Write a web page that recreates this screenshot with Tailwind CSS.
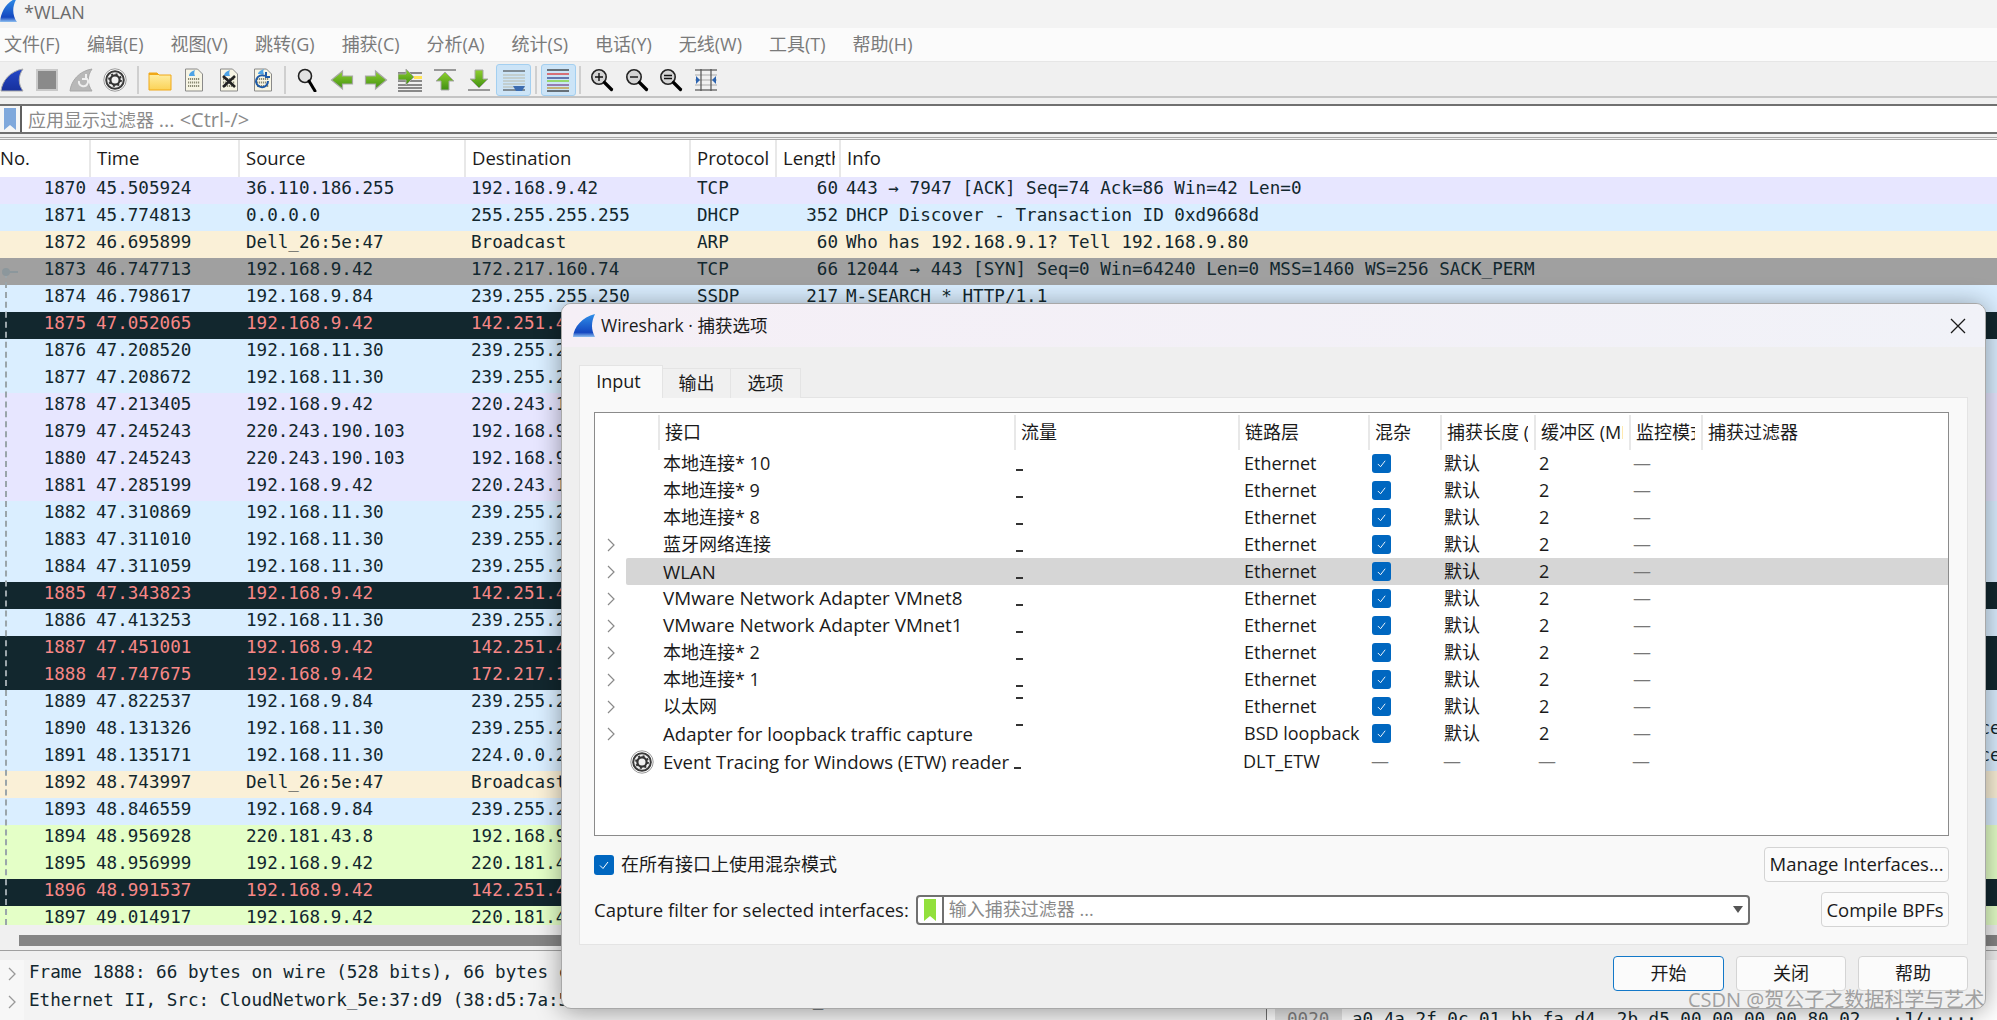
<!DOCTYPE html>
<html lang="zh-CN">
<head>
  <meta charset="UTF-8" />
  <title>*WLAN</title>
  <script src="https://cdn.jsdelivr.net/npm/@tailwindcss/browser@4"></script>
</head>
<body class="w-[1997px] h-[1020px] overflow-hidden bg-[#f0f0f0] text-[18px] text-[#1a1a1a] font-['Open_Sans','Noto_Sans_CJK_SC',sans-serif]">

  <!-- shared icons -->
  <svg class="absolute w-0 h-0">
    <defs>
      <linearGradient id="fin" x1="0" y1="0" x2="0" y2="1"><stop offset="0" stop-color="#2f8fe8"/><stop offset="0.8" stop-color="#1447c0"/><stop offset="1" stop-color="#8fc0f0"/></linearGradient>
      <linearGradient id="fin2" x1="0" y1="0" x2="0" y2="1"><stop offset="0" stop-color="#2448c8"/><stop offset="1" stop-color="#17309c"/></linearGradient>
      <linearGradient id="folder" x1="0" y1="0" x2="0" y2="1"><stop offset="0" stop-color="#fff0a8"/><stop offset="1" stop-color="#fbd257"/></linearGradient>
      <linearGradient id="arrow" x1="0" y1="0" x2="0" y2="1"><stop offset="0" stop-color="#8fd030"/><stop offset="1" stop-color="#3f8f10"/></linearGradient>
      <symbol id="gear" viewBox="0 0 24 24">
        <circle cx="12" cy="12" r="11.2" fill="#fff" stroke="#9a9a9a" stroke-width="1"/>
        <circle cx="12" cy="12" r="8.8" fill="#f0f0f0" stroke="#3a3a3a" stroke-width="2"/>
        <circle cx="12" cy="12" r="4.6" fill="none" stroke="#333" stroke-width="2.2"/>
        <circle cx="12" cy="12" r="6" fill="none" stroke="#333" stroke-width="1.8" stroke-dasharray="2 2.7"/>
      </symbol>
      <symbol id="doc" viewBox="0 0 24 24">
        <path d="M3.5 1h12l5 5v17h-17z" fill="#f7f5e4" stroke="#8a8a8a"/>
        <path d="M6 11h12M6 14.5h12M6 18h12" stroke="#8c8c74" stroke-width="2" stroke-dasharray="1.2 .8"/>
      </symbol>
      <symbol id="lens" viewBox="0 0 24 24">
        <circle cx="9" cy="9" r="7.2" fill="#d4d4d4" stroke="#222" stroke-width="1.6"/>
        <path d="M14.5 14.5l7 7" stroke="#000" stroke-width="3.2" stroke-linecap="round"/>
      </symbol>
      <symbol id="rarrow" viewBox="0 0 24 24">
        <path d="M1.5 8h10V3l11 9-11 9v-5h-10z" fill="url(#arrow)" stroke="#a8a8a8" stroke-width="1.2"/>
      </symbol>
    </defs>
  </svg>

  <div class="relative w-full h-full flex flex-col">
    <!-- title bar -->
    <div class="h-[28px] shrink-0 bg-[#f3f3f3] flex items-center overflow-hidden">
      <svg class="w-[18px] h-[26px] -mt-[6px] shrink-0" viewBox="0 0 18 26"><path d="M0 24C1 14 6 4 17 0 12 8 12 17 17 24z" fill="url(#fin)"/></svg>
      <span class="ml-[6px] mb-[5px] text-[18px] leading-none text-[#6b6b6b]">*WLAN</span>
    </div>

    <!-- menu bar -->
    <div class="h-[33px] shrink-0 bg-[#fbfbfb] flex items-center pl-[4px] gap-[27px] text-[#7a7a7a] whitespace-nowrap">
      <span>文件(F)</span><span>编辑(E)</span><span>视图(V)</span><span>跳转(G)</span><span>捕获(C)</span><span>分析(A)</span><span>统计(S)</span><span>电话(Y)</span><span>无线(W)</span><span>工具(T)</span><span>帮助(H)</span>
    </div>

    <!-- toolbar -->
    <div class="h-[37px] shrink-0 pt-[2px] bg-[#f0f0f0] border-b-2 border-[#c4c4c4] border-t border-t-[#e6e6e6] flex items-center -ml-[5px]">
      <div class="w-[34.4px] flex justify-center"><svg class="w-[24px] h-[24px]" viewBox="0 0 24 24"><path d="M1 23C2 13 10 3 23 1 18 8 18 16 23 23z" fill="url(#fin2)" stroke="#a9a9a9"/></svg></div>
      <div class="w-[34.4px] flex justify-center"><svg class="w-[24px] h-[24px]" viewBox="0 0 24 24"><rect x="2" y="2" width="20" height="20" fill="#8a8a8a" stroke="#c9c9c9" stroke-width="2"/></svg></div>
      <div class="w-[34.4px] flex justify-center"><svg class="w-[24px] h-[24px]" viewBox="0 0 24 24"><path d="M1 23C2 13 10 3 23 1 18 8 18 16 23 23z" fill="#b8b8b8" stroke="#a9a9a9"/><path d="M10 13a4.5 4.5 0 1 0 7-3M17 6v5h-4" fill="none" stroke="#efefef" stroke-width="2"/></svg></div>
      <div class="w-[34.4px] flex justify-center"><svg class="w-[24px] h-[24px]"><use href="#gear"/></svg></div>
      <div class="w-[10px] flex justify-center"><div class="w-[2px] h-[28px] bg-[#cfcfcf]"></div></div>
      <div class="w-[34.4px] flex justify-center"><svg class="w-[24px] h-[24px]" viewBox="0 0 24 24"><path d="M1 5h8l2 2h12v15H1z" fill="url(#folder)" stroke="#f0a818"/><path d="M1 5h8l2 2H1z" fill="#f0a818"/></svg></div>
      <div class="w-[34.4px] flex justify-center"><svg class="w-[24px] h-[24px]" viewBox="0 0 24 24"><use href="#doc"/><path d="M7 8c0-3 3-5 6-6 -1 2-1 4 0 6z" fill="#4da3e6"/></svg></div>
      <div class="w-[34.4px] flex justify-center"><svg class="w-[24px] h-[24px]" viewBox="0 0 24 24"><use href="#doc"/><path d="M7 8c0-3 3-5 6-6 -1 2-1 4 0 6z" fill="#4da3e6"/><path d="M6 8l12 11M18 8L6 19" stroke="#222" stroke-width="2.6"/></svg></div>
      <div class="w-[34.4px] flex justify-center"><svg class="w-[24px] h-[24px]" viewBox="0 0 24 24"><use href="#doc"/><path d="M7 6c0-2 3-4 6-5 -1 2-1 3 0 5z" fill="#4da3e6"/><path d="M14 8a6 6 0 1 0 3 5M15 4v5h4" fill="none" stroke="#1d5aa8" stroke-width="2"/></svg></div>
      <div class="w-[10px] flex justify-center"><div class="w-[2px] h-[28px] bg-[#cfcfcf]"></div></div>
      <div class="w-[34.4px] flex justify-center"><svg class="w-[24px] h-[24px]" viewBox="0 0 24 24"><circle cx="10" cy="8" r="6.5" fill="#e4e4e4" stroke="#222" stroke-width="1.6"/><path d="M14 13l6 10" stroke="#000" stroke-width="3" stroke-linecap="round"/></svg></div>
      <div class="w-[34.4px] flex justify-center"><svg class="w-[24px] h-[24px] -scale-x-100"><use href="#rarrow"/></svg></div>
      <div class="w-[34.4px] flex justify-center"><svg class="w-[24px] h-[24px]"><use href="#rarrow"/></svg></div>
      <div class="w-[34.4px] flex justify-center"><svg class="w-[24px] h-[24px]" viewBox="0 0 24 24"><path d="M0 5h24M0 9h24M0 13h24M0 17h24M0 20h24M0 23h24" stroke="#222" stroke-width="1.2"/><path d="M16 8h8v3h-8z" fill="#ffe455"/><path d="M0 6h8V1l8 8-8 8v-5H0z" fill="url(#arrow)" stroke="#a8a8a8"/></svg></div>
      <div class="w-[34.4px] flex justify-center"><svg class="w-[24px] h-[24px]" viewBox="0 0 24 24"><path d="M1 2h22" stroke="#999" stroke-width="2"/><path d="M12 4l9 9h-5v9H8v-9H3z" fill="url(#arrow)" stroke="#a8a8a8"/></svg></div>
      <div class="w-[34.4px] flex justify-center"><svg class="w-[24px] h-[24px]" viewBox="0 0 24 24"><path d="M1 22h22" stroke="#999" stroke-width="2"/><path d="M12 20l9-9h-5V2H8v9H3z" fill="url(#arrow)" stroke="#a8a8a8"/></svg></div>
      <div class="w-[34.4px] flex justify-center"><div class="w-[35px] h-[32px] shrink-0 rounded-[3px] bg-[#cce4f7] border border-[#a3cff0] flex items-center justify-center"><svg class="w-[24px] h-[24px]" viewBox="0 0 24 24"><path d="M1 3h22M1 22h22" stroke="#333" stroke-width="1.2"/><path d="M1 7h22M1 10h22M1 13h22M1 16h22M1 19h22" stroke="#b8b8a8" stroke-width="1.2"/><path d="M11 18h12l-3 5h-6z" fill="#3c6cb0"/></svg></div></div>
      <div class="w-[10px] flex justify-center"><div class="w-[2px] h-[28px] bg-[#cfcfcf]"></div></div>
      <div class="w-[34.4px] flex justify-center"><div class="w-[35px] h-[32px] shrink-0 rounded-[3px] bg-[#cce4f7] border border-[#a3cff0] flex items-center justify-center"><svg class="w-[24px] h-[24px]" viewBox="0 0 24 24"><path d="M1 2h22" stroke="#222" stroke-width="1.2"/><path d="M1 6h22" stroke="#e02020" stroke-width="1.2"/><path d="M1 10h22" stroke="#203080" stroke-width="1.2"/><path d="M1 13h22" stroke="#70d010" stroke-width="1.2"/><path d="M1 17h22" stroke="#703880" stroke-width="1.2"/><path d="M1 20h22" stroke="#c09020" stroke-width="1.2"/><path d="M1 23h22" stroke="#222" stroke-width="1.2"/></svg></div></div>
      <div class="w-[10px] flex justify-center"><div class="w-[2px] h-[28px] bg-[#cfcfcf]"></div></div>
      <div class="w-[34.4px] flex justify-center"><svg class="w-[24px] h-[24px]" viewBox="0 0 24 24"><use href="#lens"/><path d="M5 9h8M9 5v8" stroke="#111" stroke-width="1.4"/></svg></div>
      <div class="w-[34.4px] flex justify-center"><svg class="w-[24px] h-[24px]" viewBox="0 0 24 24"><use href="#lens"/><path d="M5 9h8" stroke="#111" stroke-width="1.4"/></svg></div>
      <div class="w-[34.4px] flex justify-center"><svg class="w-[24px] h-[24px]" viewBox="0 0 24 24"><use href="#lens"/><path d="M5 7.5h8M5 10.5h8" stroke="#111" stroke-width="1.4"/></svg></div>
      <div class="w-[34.4px] flex justify-center"><svg class="w-[24px] h-[24px]" viewBox="0 0 24 24"><path d="M1 2h22M1 22h22" stroke="#333" stroke-width="1.2"/><path d="M1 7h22M1 12h22M1 17h22" stroke="#aaa" stroke-width="1.2"/><path d="M7 1v22M17 1v22" stroke="#555" stroke-width="1.2"/><path d="M2 8l4 4-4 4zM22 8l-4 4 4 4z" fill="#2c64b0"/></svg></div>
    </div>

    <!-- display filter -->
    <div class="mt-[6px] h-[30px] shrink-0 bg-white border-y-2 border-[#707070] flex items-center">
      <div class="w-[22px] h-full flex justify-center items-center bg-[#f6f6f6] border-r-2 border-[#606060]">
        <svg class="w-[12px] h-[22px]" viewBox="0 0 12 22"><path d="M0 0h12v22l-6-5-6 5z" fill="#7fa8dc"/></svg>
      </div>
      <span class="ml-[6px] mt-[1px] text-[#8a8a8a]">应用显示过滤器 <span class="text-[20px]">... &lt;Ctrl-/&gt;</span></span>
    </div>
    <div class="h-[3px] shrink-0 mt-[3px] border-y border-[#a8a8a8]"></div>

    <!-- packet list header -->
    <div class="h-[37px] shrink-0 bg-white flex items-center whitespace-nowrap leading-none text-[18.5px] pb-[1px]">
      <div class="w-[91px] h-[37px] flex items-center border-r-2 border-[#e8e8e8]">No.</div>
      <div class="w-[149px] h-[37px] flex items-center pl-[6px] border-r-2 border-[#e8e8e8]">Time</div>
      <div class="w-[226px] h-[37px] flex items-center pl-[6px] border-r-2 border-[#e8e8e8]">Source</div>
      <div class="w-[225px] h-[37px] flex items-center pl-[6px] border-r-2 border-[#e8e8e8]">Destination</div>
      <div class="w-[86px] h-[37px] flex items-center pl-[6px] border-r-2 border-[#e8e8e8]">Protocol</div>
      <div class="w-[64px] h-[37px] flex items-center pl-[6px] border-r-2 border-[#e8e8e8]"><span class="w-[52px] overflow-hidden">Length</span></div>
      <div class="flex-1 h-[37px] flex items-center pl-[6px]">Info</div>
    </div>

    <!-- packet list -->
    <div class="relative h-[748px] shrink-0 overflow-hidden font-['DejaVu_Sans_Mono',monospace] text-[17.6px] text-[#12272e] whitespace-nowrap" id="packets"></div>

    <!-- packet detail + bytes -->
    <div class="flex-1 min-h-0 overflow-hidden font-['DejaVu_Sans_Mono',monospace] text-[17.6px] text-[#12272e] whitespace-nowrap">
      <div class="h-[25px] flex items-center pl-[19px] pt-[5px]"><div class="flex-1 h-[11px] bg-[#858585]"></div></div>
      <div class="h-[1px] bg-[#a0a0a0]"></div>
      <div class="flex mt-[9px] h-[60px]">
        <div class="w-[24px] shrink-0 bg-[#f7f7f7] flex flex-col">
          <div class="h-[28px] flex items-center justify-center"><svg class="w-[10px] h-[14px]" viewBox="0 0 10 14"><path d="M2 1l6 6-6 6" fill="none" stroke="#999" stroke-width="1.3"/></svg></div>
          <div class="h-[28px] flex items-center justify-center"><svg class="w-[10px] h-[14px]" viewBox="0 0 10 14"><path d="M2 1l6 6-6 6" fill="none" stroke="#999" stroke-width="1.3"/></svg></div>
        </div>
        <div class="w-[1243px] shrink-0 bg-[#f3f3f3] pl-[5px] overflow-hidden border-r border-[#707070]">
          <div class="h-[28px] leading-[25px]">Frame 1888: 66 bytes on wire (528 bits), 66 bytes captured (528 bits) on interface</div>
          <div class="h-[28px] leading-[25px]">Ethernet II, Src: CloudNetwork_5e:37:d9 (38:d5:7a:5e:37:d9), Dst: 00:00:00_00:00:00</div>
          <div class="h-[28px] leading-[25px]">Internet Protocol Version 4, Src: 192.168.9.42, Dst: 172.217.160.74</div>
        </div>
        <div class="flex-1 flex pt-[46px] bg-white">
          <div class="ml-[8px] w-[67px] pl-[12px] h-[40px] bg-[#e4e4e4] text-[#808080]">0020</div>
          <div class="pl-[10px] whitespace-pre">a0 4a 2f 0c 01 bb fa d4  2b d5 00 00 00 00 80 02   ·J/·····  ······</div>
        </div>
      </div>
    </div>
  </div>

  <!-- capture options dialog -->
  <div class="absolute left-[561px] top-[303px] w-[1425px] h-[706px] rounded-[10px] border border-[#a8a8a8] bg-[#efefef] shadow-[0_2px_26px_rgba(0,0,0,0.38)] flex flex-col overflow-hidden">
    <div class="h-[43px] shrink-0 bg-gradient-to-r from-[#f5eff6] to-[#f1f2f8] flex items-center pl-[10px]">
      <svg class="w-[24px] h-[24px]" viewBox="0 0 24 24"><path d="M1 23C2 13 10 3 23 0 19 8 19 16 23 23z" fill="url(#fin)"/></svg>
      <span class="ml-[5px] text-[17.5px]">Wireshark · 捕获选项</span>
      <svg class="ml-auto mr-[19px] w-[16px] h-[16px]" viewBox="0 0 16 16"><path d="M1 1l14 14M15 1L1 15" stroke="#1a1a1a" stroke-width="1.3"/></svg>
    </div>
    <div class="flex-1 px-[17px] pt-[18px] flex flex-col">
      <!-- tabs -->
      <div class="flex h-[33px] items-end -mb-px relative leading-none">
        <div class="w-[84px] h-[33px] pr-[5px] pb-[2px] bg-[#f9f9f9] border border-b-0 border-[#e4e4e4] flex items-center justify-center">Input</div>
        <div class="w-[68px] h-[30px] pb-[2px] bg-[#f0f0f0] border-t border-r border-[#e4e4e4] flex items-center justify-center">输出</div>
        <div class="w-[70px] h-[30px] pb-[2px] bg-[#f0f0f0] border-t border-r border-[#e4e4e4] flex items-center justify-center">选项</div>
      </div>
      <div class="h-[548px] bg-[#f9f9f9] border border-[#e4e4e4] pl-[14px] pr-[18px] pt-[14px] flex flex-col">
        <!-- interface list -->
        <div class="h-[424px] shrink-0 bg-white border border-[#8b8b8b] flex flex-col overflow-hidden" id="ifaces"></div>
        <div class="mt-[11px] h-[35px] flex items-center">
          <div class="w-[20px] h-[20px] rounded-[3px] bg-[#0067c0] flex items-center justify-center"><svg class="w-[12px] h-[12px]" viewBox="0 0 12 12"><path d="M2 6.5l3 3 5-6.5" fill="none" stroke="#fff" stroke-width="1"/></svg></div>
          <span class="ml-[7px]">在所有接口上使用混杂模式</span>
          <div class="ml-auto h-[35px] w-[185px] pb-[2px] rounded-[4px] bg-[#fbfbfb] border border-[#d4d4d4] flex items-center justify-center whitespace-nowrap text-[18.5px]">Manage Interfaces...</div>
        </div>
        <div class="mt-[10px] h-[35px] flex items-center">
          <span class="text-[18.5px]">Capture filter for selected interfaces:</span>
          <div class="ml-[7px] w-[834px] h-[30px] rounded-[4px] bg-white border-2 border-[#707070] flex items-center">
            <div class="w-[26px] h-full flex justify-center items-center border-r-2 border-[#707070]"><svg class="w-[12px] h-[22px]" viewBox="0 0 12 22"><path d="M0 0h12v22l-6-5-6 5z" fill="#92e03c"/></svg></div>
            <span class="ml-[5px] text-[#8a8a8a]">输入捕获过滤器 ...</span>
            <svg class="ml-auto mr-[5px] w-[10px] h-[7px]" viewBox="0 0 10 7"><path d="M0 0h10L5 7z" fill="#555"/></svg>
          </div>
          <div class="ml-auto h-[35px] w-[128px] rounded-[4px] bg-[#fbfbfb] border border-[#d4d4d4] flex items-center justify-center whitespace-nowrap text-[18.5px]">Compile BPFs</div>
        </div>
      </div>
      <!-- dialog buttons -->
      <div class="mt-[11px] flex justify-end gap-[12px]">
        <div class="w-[111px] h-[35px] rounded-[4px] bg-[#fbfbfb] border border-[#1378c8] flex items-center justify-center">开始</div>
        <div class="w-[110px] h-[35px] rounded-[4px] bg-[#fbfbfb] border border-[#d4d4d4] flex items-center justify-center">关闭</div>
        <div class="w-[110px] h-[35px] rounded-[4px] bg-[#fbfbfb] border border-[#d4d4d4] flex items-center justify-center">帮助</div>
      </div>
    </div>
  </div>

  <!-- watermark -->
  <div class="absolute left-[1688px] top-[987px] text-[20px] leading-[26px] text-[#a0a0a0] whitespace-nowrap">CSDN @贺公子之数据科学与艺术</div>

  <script>
    const lav = 'bg-[#e7e6ff]', blue = 'bg-[#daeeff]', tan = 'bg-[#faf0d7]', gray = 'bg-[#a0a0a0]', dark = 'bg-[#12272e] text-[#f78787]', grn = 'bg-[#e4ffc7]';
    const mdns = 'Standard query 0x0000 PTR _233637DE._sub._googlecast._tcp.local, "QM" question PTR _ipps._tcp.local, _services._dns-sd._udp.local';
    const ssdp = 'M-SEARCH * HTTP/1.1';
    const packets = [
      [1870, '45.505924', '36.110.186.255', '192.168.9.42', 'TCP', 60, '443 → 7947 [ACK] Seq=74 Ack=86 Win=42 Len=0', lav],
      [1871, '45.774813', '0.0.0.0', '255.255.255.255', 'DHCP', 352, 'DHCP Discover - Transaction ID 0xd9668d', blue],
      [1872, '46.695899', 'Dell_26:5e:47', 'Broadcast', 'ARP', 60, 'Who has 192.168.9.1? Tell 192.168.9.80', tan],
      [1873, '46.747713', '192.168.9.42', '172.217.160.74', 'TCP', 66, '12044 → 443 [SYN] Seq=0 Win=64240 Len=0 MSS=1460 WS=256 SACK_PERM', gray],
      [1874, '46.798617', '192.168.9.84', '239.255.255.250', 'SSDP', 217, ssdp, blue],
      [1875, '47.052065', '192.168.9.42', '142.251.43.10', 'TCP', 66, '12045 → 443 [SYN]', dark],
      [1876, '47.208520', '192.168.11.30', '239.255.255.250', 'SSDP', 217, ssdp, blue],
      [1877, '47.208672', '192.168.11.30', '239.255.255.250', 'SSDP', 217, ssdp, blue],
      [1878, '47.213405', '192.168.9.42', '220.243.190.103', 'TCP', 54, '7947 → 443 [ACK]', lav],
      [1879, '47.245243', '220.243.190.103', '192.168.9.42', 'TCP', 60, '443 → 7947 [ACK]', lav],
      [1880, '47.245243', '220.243.190.103', '192.168.9.42', 'TCP', 60, '443 → 7947 [FIN, ACK]', lav],
      [1881, '47.285199', '192.168.9.42', '220.243.190.103', 'TCP', 54, '7947 → 443 [ACK]', lav],
      [1882, '47.310869', '192.168.11.30', '239.255.255.250', 'SSDP', 217, ssdp, blue],
      [1883, '47.311010', '192.168.11.30', '239.255.255.250', 'SSDP', 217, ssdp, blue],
      [1884, '47.311059', '192.168.11.30', '239.255.255.250', 'SSDP', 217, ssdp, blue],
      [1885, '47.343823', '192.168.9.42', '142.251.43.10', 'TCP', 66, '[TCP Retransmission]', dark],
      [1886, '47.413253', '192.168.11.30', '239.255.255.250', 'SSDP', 217, ssdp, blue],
      [1887, '47.451001', '192.168.9.42', '142.251.43.10', 'TCP', 66, '[TCP Retransmission]', dark],
      [1888, '47.747675', '192.168.9.42', '172.217.160.74', 'TCP', 66, '[TCP Retransmission]', dark],
      [1889, '47.822537', '192.168.9.84', '239.255.255.250', 'SSDP', 217, ssdp, blue],
      [1890, '48.131326', '192.168.11.30', '239.255.255.250', 'SSDP', 217, mdns, blue],
      [1891, '48.135171', '192.168.11.30', '224.0.0.251', 'MDNS', 217, mdns, blue],
      [1892, '48.743997', 'Dell_26:5e:47', 'Broadcast', 'ARP', 60, 'Who has 192.168.9.1?', tan],
      [1893, '48.846559', '192.168.9.84', '239.255.255.250', 'SSDP', 217, ssdp, blue],
      [1894, '48.956928', '220.181.43.8', '192.168.9.42', 'HTTP', 60, 'HTTP/1.1 200 OK', grn],
      [1895, '48.956999', '192.168.9.42', '220.181.43.8', 'HTTP', 54, 'GET / HTTP/1.1', grn],
      [1896, '48.991537', '192.168.9.42', '142.251.43.10', 'TCP', 66, '[TCP Retransmission]', dark],
      [1897, '49.014917', '192.168.9.42', '220.181.43.8', 'HTTP', 54, 'GET / HTTP/1.1', grn],
    ];
    document.getElementById('packets').innerHTML = packets.map(p => `
      <div class="h-[27px] leading-[22px] flex overflow-hidden ${p[7]}">
        <div class="w-[86px] shrink-0 text-right">${p[0]}</div>
        <div class="w-[160px] shrink-0 pl-[10px]">${p[1]}</div>
        <div class="w-[225px] shrink-0">${p[2]}</div>
        <div class="w-[226px] shrink-0">${p[3]}</div>
        <div class="w-[80px] shrink-0">${p[4]}</div>
        <div class="w-[61px] shrink-0 text-right">${p[5]}</div>
        <div class="pl-[8px]">${p[6]}</div>
      </div>`).join('') + `
      <div class="absolute left-[5px] top-[95px] w-[1px] h-[653px] border-l-2 border-dashed border-[#9aa5aa]"></div>
      <div class="absolute left-[2px] top-[91px] w-[8px] h-[8px] rounded-full bg-[#8c979c]"></div>
      <div class="absolute left-[8px] top-[94px] w-[10px] h-[2px] bg-[#8c979c]"></div>`;

    const chevron = '<svg class="w-[10px] h-[14px]" viewBox="0 0 10 14"><path d="M2 1l6 6-6 6" fill="none" stroke="#8a8a8a" stroke-width="1.2"/></svg>';
    const check = '<div class="w-[19px] h-[19px] rounded-[3px] bg-[#0067c0] flex items-center justify-center"><svg class="w-[11px] h-[11px]" viewBox="0 0 12 12"><path d="M2 6.5l3 3 5-6.5" fill="none" stroke="#fff" stroke-width="1"/></svg></div>';
    const latin = 'text-[18.6px]', vmnet = 'text-[18.85px]';
    const ifaces = [
      ['本地连接* 10', 'Ethernet', 0, ''], ['本地连接* 9', 'Ethernet', 0, ''], ['本地连接* 8', 'Ethernet', 0, ''],
      ['蓝牙网络连接', 'Ethernet', 1, ''], ['WLAN', 'Ethernet', 1, latin], ['VMware Network Adapter VMnet8', 'Ethernet', 1, vmnet],
      ['VMware Network Adapter VMnet1', 'Ethernet', 1, vmnet], ['本地连接* 2', 'Ethernet', 1, ''], ['本地连接* 1', 'Ethernet', 1, ''],
      ['以太网', 'Ethernet', 1, ''], ['Adapter for loopback traffic capture', 'BSD loopback', 1, latin],
    ];
    const head = [['接口', 'w-[356px]'], ['流量', 'w-[224px]'], ['链路层', 'w-[130px]'], ['混杂', 'w-[72px]'], ['捕获长度 (B)', 'w-[94px]'], ['缓冲区 (MB)', 'w-[95px]'], ['监控模式', 'w-[72px]'], ['捕获过滤器', 'w-[200px]']];
    let html = '<div class="h-[37px] shrink-0 pt-[2px] flex pl-[63px]">' + head.map(h => `
      <div class="${h[1]} shrink-0 h-full border-l-2 border-[#e8e8e8] pl-[5px] pr-[6px] flex items-center"><span class="overflow-hidden whitespace-nowrap">${h[0]}</span></div>`).join('') + '</div>';
    ifaces.forEach((f, i) => {
      // the traffic sparkline dash sits low, except in two rows where it drifts up
      const dash = (i === 9 || i === 10) ? 'mb-[18px]' : 'mt-[13px]';
      html += `<div class="h-[27px] shrink-0 flex items-center">
        <div class="w-[31px] flex justify-center">${f[2] ? chevron : ''}</div>
        <div class="flex-1 h-full flex items-center ${i === 4 ? 'bg-[#d6d6d6] rounded-l-[2px]' : ''}">
          <div class="w-[37px]"></div>
          <div class="w-[353px] whitespace-nowrap ${f[3]}">${f[0]}</div>
          <div class="w-[228px] h-full flex items-center"><div class="w-[7px] h-[2px] bg-[#333] ${dash}"></div></div>
          <div class="w-[128px]">${f[1]}</div>
          <div class="w-[72px]">${check}</div>
          <div class="w-[95px]">默认</div>
          <div class="w-[94px]">2</div>
          <div class="text-[#777]">—</div>
        </div>
      </div>`;
    });
    html += `<div class="h-[27px] shrink-0 flex items-center pl-[35px] mt-[1px]">
      <svg class="w-[24px] h-[24px]"><use href="#gear"/></svg>
      <div class="ml-[9px] w-[351px] whitespace-nowrap text-[18.6px]">Event Tracing for Windows (ETW) reader</div>
      <div class="w-[229px] h-full flex items-center"><div class="w-[7px] h-[2px] bg-[#333] mt-[13px]"></div></div>
      <div class="w-[128px]">DLT_ETW</div>
      <div class="w-[72px] text-[#777]">—</div>
      <div class="w-[95px] text-[#777]">—</div>
      <div class="w-[94px] text-[#777]">—</div>
      <div class="text-[#777]">—</div>
    </div>`;
    document.getElementById('ifaces').innerHTML = html;
  </script>
</body>
</html>
